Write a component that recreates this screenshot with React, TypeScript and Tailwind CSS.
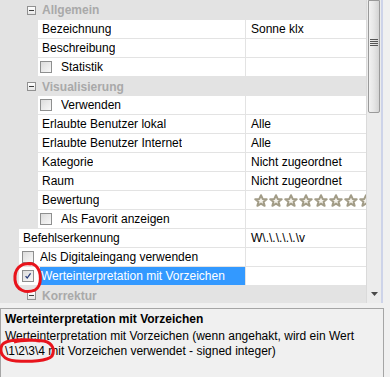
import React from 'react';

type Row =
  | { kind: 'header'; label: string; first?: boolean }
  | {
      kind: 'prop';
      label: string;
      value?: string;
      level: 1 | 0;
      checkbox?: boolean;
      checked?: boolean;
      selected?: boolean;
      stars?: boolean;
    };

const rows: Row[] = [
  { kind: 'header', label: 'Allgemein', first: true },
  { kind: 'prop', label: 'Bezeichnung', value: 'Sonne klx', level: 1 },
  { kind: 'prop', label: 'Beschreibung', level: 1 },
  { kind: 'prop', label: 'Statistik', level: 1, checkbox: true },
  { kind: 'header', label: 'Visualisierung' },
  { kind: 'prop', label: 'Verwenden', level: 1, checkbox: true },
  { kind: 'prop', label: 'Erlaubte Benutzer lokal', value: 'Alle', level: 1 },
  { kind: 'prop', label: 'Erlaubte Benutzer Internet', value: 'Alle', level: 1 },
  { kind: 'prop', label: 'Kategorie', value: 'Nicht zugeordnet', level: 1 },
  { kind: 'prop', label: 'Raum', value: 'Nicht zugeordnet', level: 1 },
  { kind: 'prop', label: 'Bewertung', level: 1, stars: true },
  { kind: 'prop', label: 'Als Favorit anzeigen', level: 1, checkbox: true },
  { kind: 'prop', label: 'Befehlserkennung', value: 'W\\.\\.\\.\\.\\.\\v', level: 0 },
  { kind: 'prop', label: 'Als Digitaleingang verwenden', level: 0, checkbox: true },
  { kind: 'prop', label: 'Werteinterpretation mit Vorzeichen', level: 0, checkbox: true, checked: true, selected: true },
  { kind: 'header', label: 'Korrektur' },
];

function Checkbox({ checked }: { checked?: boolean }) {
  return (
    <div className="w-[12px] h-[12px] shrink-0 border border-[#8e8f8f] bg-gradient-to-br from-[#dcdcdc] to-[#f8f8f8] p-[1px]">
      {checked && (
        <svg viewBox="0 0 10 10" className="w-full h-full">
          <path d="M2 5.2 L4 7.6 L8.2 1.8" fill="none" stroke="#253a7a" strokeWidth="1.6" />
        </svg>
      )}
    </div>
  );
}

function Minus() {
  return (
    <div className="w-[9px] h-[9px] border border-[#919191] bg-gradient-to-b from-white to-[#e6e6e6] flex items-center justify-center">
      <div className="w-[5px] h-[1px] bg-[#3d3d3d]" />
    </div>
  );
}

function Star() {
  return (
    <svg viewBox="0 0 14 13" className="w-[14px] h-[13px] shrink-0">
      <path
        d="M7 1.2 L8.7 4.9 L12.7 5.2 L9.6 7.8 L10.6 11.8 L7 9.6 L3.4 11.8 L4.4 7.8 L1.3 5.2 L5.3 4.9 Z"
        fill="#f4f2ec"
        stroke="#a29c87"
        strokeWidth="2"
        strokeLinejoin="round"
      />
    </svg>
  );
}

function PropRow({ row }: { row: Extract<Row, { kind: 'prop' }> }) {
  const gutter = row.level === 1 ? 'w-[38px]' : 'w-[19px]';
  return (
    <div className="flex h-[19px]">
      <div className={`${gutter} shrink-0 bg-[#e3e3e3]`} />
      <div className="flex-1 flex border-b border-[#e3e3e3] bg-white">
        <div className="flex-1 flex items-center min-w-0 border-r border-[#e3e3e3]">
          {row.checkbox ? (
            <>
              <div className={row.level === 1 ? 'pl-[2px] pr-[9px]' : 'pl-[3px] pr-[6px]'}>
                <Checkbox checked={row.checked} />
              </div>
              <div
                className={`h-full flex-1 flex items-center whitespace-nowrap overflow-hidden ${
                  row.selected ? 'bg-[#3399ff] text-white pl-[1px]' : 'text-black'
                }`}
              >
                {row.label}
              </div>
            </>
          ) : (
            <span className="pl-[4px] whitespace-nowrap overflow-hidden">{row.label}</span>
          )}
        </div>
        <div className="w-[120px] shrink-0 flex items-center pl-[5px] overflow-hidden whitespace-nowrap">
          {row.stars ? (
            <div className="flex gap-[1px] pl-[3px]">
              {Array.from({ length: 9 }).map((_, i) => (
                <Star key={i} />
              ))}
            </div>
          ) : (
            row.value
          )}
        </div>
      </div>
    </div>
  );
}

export default function App() {
  return (
    <div className="relative w-[390px] h-[377px] overflow-hidden bg-[#f0f0f0] text-[12px] text-black font-['Liberation_Sans',Arial,sans-serif]">
      <div className="flex h-[303px]">
        <div className="w-[366px] shrink-0 overflow-hidden bg-white">
          {rows.map((row, i) =>
            row.kind === 'header' ? (
              <div
                key={i}
                className={`flex items-center bg-[#e3e3e3] ${row.first ? 'h-[20px]' : 'h-[19px]'}`}
              >
                <div className="pl-[27px] pr-[6px]">
                  <Minus />
                </div>
                <span className="font-bold text-[#a9a9a9]">{row.label}</span>
              </div>
            ) : (
              <PropRow key={i} row={row} />
            )
          )}
        </div>
        <div className="w-[15px] shrink-0 bg-[#ececec] border-l border-[#dadada] flex flex-col relative">
          <div className="h-[113px] mx-[1px] border border-[#9a9a9a] rounded-b-[2px] bg-gradient-to-r from-[#f2f2f2] via-[#e6e6e6] to-[#d4d4d4] flex items-start justify-center pt-[38px]">
            <div className="flex flex-col gap-[1px]">
              <div className="w-[8px] h-[1px] bg-[#555]" />
              <div className="w-[8px] h-[1px] bg-[#555]" />
              <div className="w-[8px] h-[1px] bg-[#555]" />
              <div className="w-[8px] h-[1px] bg-[#555]" />
            </div>
          </div>
          <div className="flex-1" />
          <div className="h-[18px] flex items-center justify-center">
            <svg viewBox="0 0 7 4" className="w-[7px] h-[4px]">
              <path d="M0 0 H7 L3.5 4 Z" fill="#4a4a4a" />
            </svg>
          </div>
        </div>
        <div className="w-[2px] shrink-0 bg-[#cdd3e9]" />
        <div className="flex-1" />
      </div>
      <div className="mt-[5px] ml-0 mr-[6px] h-[80px] border border-[#a5a5a5] bg-[#f0f0f0] px-[4px] pt-[3px] leading-[15px]">
        <div className="font-bold">Werteinterpretation mit Vorzeichen</div>
        <div className="pt-[2px]">
          Werteinterpretation mit Vorzeichen (wenn angehakt, wird ein Wert \1\2\3\4 mit Vorzeichen verwendet - signed integer)
        </div>
      </div>
      <svg className="absolute inset-0 pointer-events-none" width="390" height="377">
        <path
          d="M31 264 C20 262 14 270 15 280 C16 290 26 294 35 290 C42 286 42 272 36 266 C33 263 28 263 26 264"
          fill="none"
          stroke="#e8141c"
          strokeWidth="3"
        />
        <path
          d="M40 341 C25 339 6 339 2 345 C-1 352 2 360 16 361 C30 362 48 361 52 356 C55 350 53 343 44 341 C36 340 22 340 14 342"
          fill="none"
          stroke="#e8141c"
          strokeWidth="3"
        />
      </svg>
    </div>
  );
}
